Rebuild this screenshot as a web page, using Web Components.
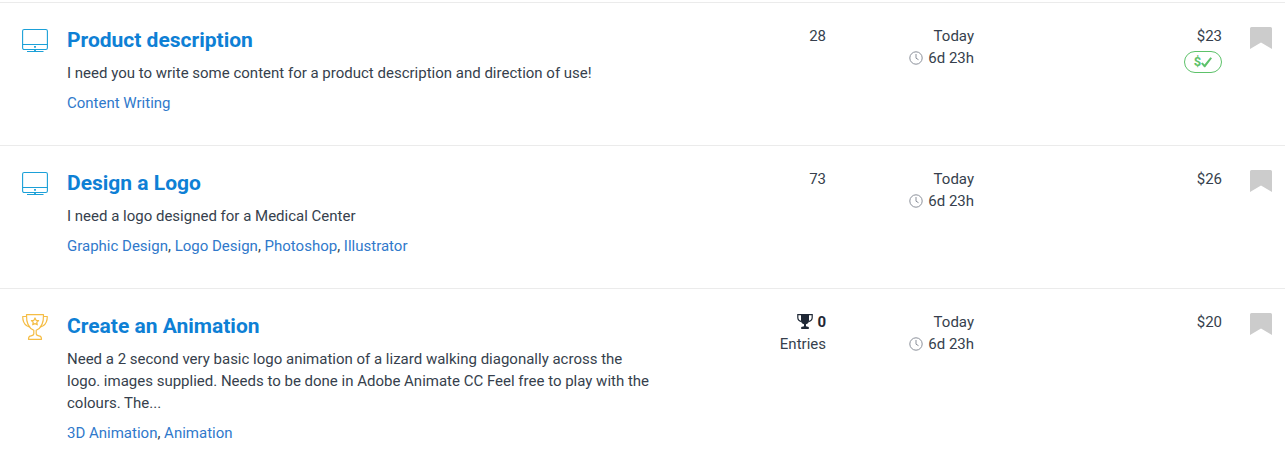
<!DOCTYPE html>
<html lang="en">
<head>
<meta charset="utf-8">
<meta name="viewport" content="width=device-width, initial-scale=1">
<title>Projects</title>
<style>
  body { margin: 0; background: #fff; color: #363f4d; font: 15px/22px Roboto, sans-serif; overflow-x: hidden; }
</style>
</head>
<body>
<project-table></project-table>

<script>
class ShadowElement extends HTMLElement {
  constructor() {
    super();
    this.attachShadow({ mode: 'open' });
  }
  connectedCallback() {
    this.shadowRoot.innerHTML = this.render();
  }
}

const KIND_ICONS = {
  project: `<svg viewBox="0 0 26 26" width="26" height="26" fill="none" stroke="#1ba0d8" stroke-width="1.1" aria-hidden="true">
      <rect x=".6" y="1.500" width="24.800" height="20" rx="1.600"/>
      <path d="M.6 16.500h24.800M5 23.500h16.500"/>
      <path d="M13 18v1.800M13 21.500v2" stroke-width="1.800"/>
    </svg>`,
  contest: `<svg viewBox="0 0 26 26" width="26" height="26" fill="none" stroke="#f5bd45" stroke-width="1.200" stroke-linejoin="round" aria-hidden="true">
      <path d="M4.500.7h17c.2 7-1.800 13.300-7.300 15.500v3.600c0 1.500 1.300 2 3.600 2.300 1.200.2 1.700 1.100 1.700 3.200h-13c0-2.100.5-3 1.700-3.200 2.300-.3 3.600-.8 3.600-2.300v-3.600C6.300 14 4.300 7.700 4.500.7z"/>
      <path d="M4.500 2.500H.7c0 5 1.300 7.500 4.100 9.200l3.200 1.600M21.500 2.500h3.800c0 5-1.300 7.500-4.100 9.200L18 13.300"/>
      <path d="M13 4l1.100 2.300 2.500.3-1.800 1.700.5 2.500L13 9.600l-2.300 1.200.5-2.500-1.800-1.700 2.500-.3z"/>
    </svg>`
};

customElements.define('kind-icon', class extends ShadowElement {
  render() {
    return `<style>:host { display: block; } svg { display: block; }</style>${KIND_ICONS[this.getAttribute('kind')]}`;
  }
});

customElements.define('project-summary', class extends ShadowElement {
  render() {
    return `<style>
        :host { display: flex; flex-direction: column; gap: 8px; padding-right: 16px; }
        h2 { margin: 0; font-size: 21px; line-height: 28px; font-weight: 700; }
        h2 a { color: #0e80d5; text-decoration: none; }
        p { margin: 0; }
      </style>
      <h2><a href="#"><slot name="title"></slot></a></h2>
      <p><slot></slot></p>
      <div><slot name="skills"></slot></div>`;
  }
});

customElements.define('skill-list', class extends ShadowElement {
  render() {
    const links = this.getAttribute('skills').split('|').map(s => `<a href="#">${s}</a>`).join(', ');
    return `<style>:host { display: block; } a { color: #3079cb; text-decoration: none; }</style>${links}`;
  }
});

customElements.define('entry-count', class extends ShadowElement {
  render() {
    return `<style>
        :host { display: block; }
        div { display: flex; justify-content: flex-end; align-items: center; gap: 4px; color: #1f2836; font-weight: 700; }
        svg { margin-bottom: 2px; }
      </style>
      <div><svg viewBox="0 0 16 16" width="16" height="16" aria-hidden="true">
        <path fill="currentColor" d="M4 1h8v6.500c0 2-1.200 3.200-3 3.800v2l2.800.8V16H4.200v-1.900l2.800-.8v-2c-1.800-.6-3-1.800-3-3.800z"/>
        <path fill="none" stroke="currentColor" stroke-width="1.200" d="M4.500 1.600H.8v2.900c0 2.200 1.400 3.500 3.700 4.100M11.500 1.600h3.700v2.900c0 2.200-1.400 3.500-3.700 4.100"/>
      </svg><slot></slot></div>
      <span>Entries</span>`;
  }
});

customElements.define('time-left', class extends ShadowElement {
  render() {
    return `<style>
        :host { display: block; }
        div { display: flex; justify-content: flex-end; align-items: center; gap: 5px; }
      </style>
      <span>Today</span>
      <div><svg viewBox="0 0 14 14" width="14" height="14" fill="none" stroke="#8b909a" aria-hidden="true">
        <circle cx="7" cy="7" r="6.200"/><path d="M7 3v4.200l2.500 1.500"/>
      </svg><slot></slot></div>`;
  }
});

customElements.define('payment-badge', class extends ShadowElement {
  render() {
    return `<style>
        :host { display: flex; justify-content: flex-end; padding-top: 4px; }
        span { display: flex; align-items: center; justify-content: center; box-sizing: border-box; width: 38px; height: 22px;
               border: 1px solid #5dc26a; border-radius: 11px; color: #5dc26a; font-size: 13px; line-height: 20px; font-weight: 700; }
      </style>
      <span title="Payment verified">$<svg viewBox="0 0 11 11" width="11" height="11" aria-hidden="true">
        <path fill="currentColor" d="M0 6.600l1.600-1.100 1.900 2.100L9.400.3l1.600.9L4.200 10.300H3.200z"/>
      </svg></span>`;
  }
});

customElements.define('bookmark-button', class extends ShadowElement {
  render() {
    return `<style>
        :host { display: block; }
        button { display: block; padding: 0; border: 0; background: none; color: #ccc; cursor: pointer; }
        svg { display: block; }
      </style>
      <button type="button" aria-label="Bookmark project"><svg viewBox="0 0 22 22" width="22" height="22" aria-hidden="true">
        <path fill="currentColor" d="M1.500 0h19Q22 0 22 1.500V22l-11-6.500L0 22V1.500Q0 0 1.500 0z"/>
      </svg></button>`;
  }
});

const PROJECTS = [
  { kind: 'project', title: 'Product description', text: 'I need you to write some content for a product description and direction of use!',
    skills: 'Content Writing', bids: '28', price: '$23', verified: true },
  { kind: 'project', title: 'Design a Logo', text: 'I need a logo designed for a Medical Center',
    skills: 'Graphic Design|Logo Design|Photoshop|Illustrator', bids: '73', price: '$26' },
  { kind: 'contest', title: 'Create an Animation', text: 'Need a 2 second very basic logo animation of a lizard walking diagonally across the logo. images supplied. Needs to be done in Adobe Animate CC Feel free to play with the colours. The...',
    skills: '3D Animation|Animation', bids: '<entry-count>0</entry-count>', price: '$20' }
];

customElements.define('project-table', class extends ShadowElement {
  render() {
    const rows = PROJECTS.map(p => `<tr>
      <td class="kind"><kind-icon kind="${p.kind}"></kind-icon></td>
      <td><project-summary><span slot="title">${p.title}</span>${p.text}<skill-list slot="skills" skills="${p.skills}"></skill-list></project-summary></td>
      <td class="figure">${p.bids}</td>
      <td class="figure"><time-left>6d 23h</time-left></td>
      <td class="figure">${p.price}${p.verified ? '<payment-badge></payment-badge>' : ''}</td>
      <td class="mark"><bookmark-button></bookmark-button></td>
    </tr>`).join('');
    return `<style>
        :host { display: block; padding-top: 2px; }
        table { width: 100%; table-layout: fixed; border-spacing: 0; }
        td { padding: 23px 0 31px; border-top: 1px solid #ebebeb; vertical-align: top; }
        .kind { padding-left: 22px; padding-top: 25px; }
        .figure { text-align: right; padding-top: 22px; }
        .mark { padding-left: 28px; padding-top: 24px; }
        .c-kind { width: 67px; } .c-bids { width: 155px; } .c-time { width: 148px; } .c-price { width: 248px; } .c-mark { width: 63px; }
      </style>
      <table aria-label="Projects">
        <colgroup><col class="c-kind"><col><col class="c-bids"><col class="c-time"><col class="c-price"><col class="c-mark"></colgroup>
        <tbody>${rows}</tbody>
      </table>`;
  }
});
</script>
</body>
</html>
